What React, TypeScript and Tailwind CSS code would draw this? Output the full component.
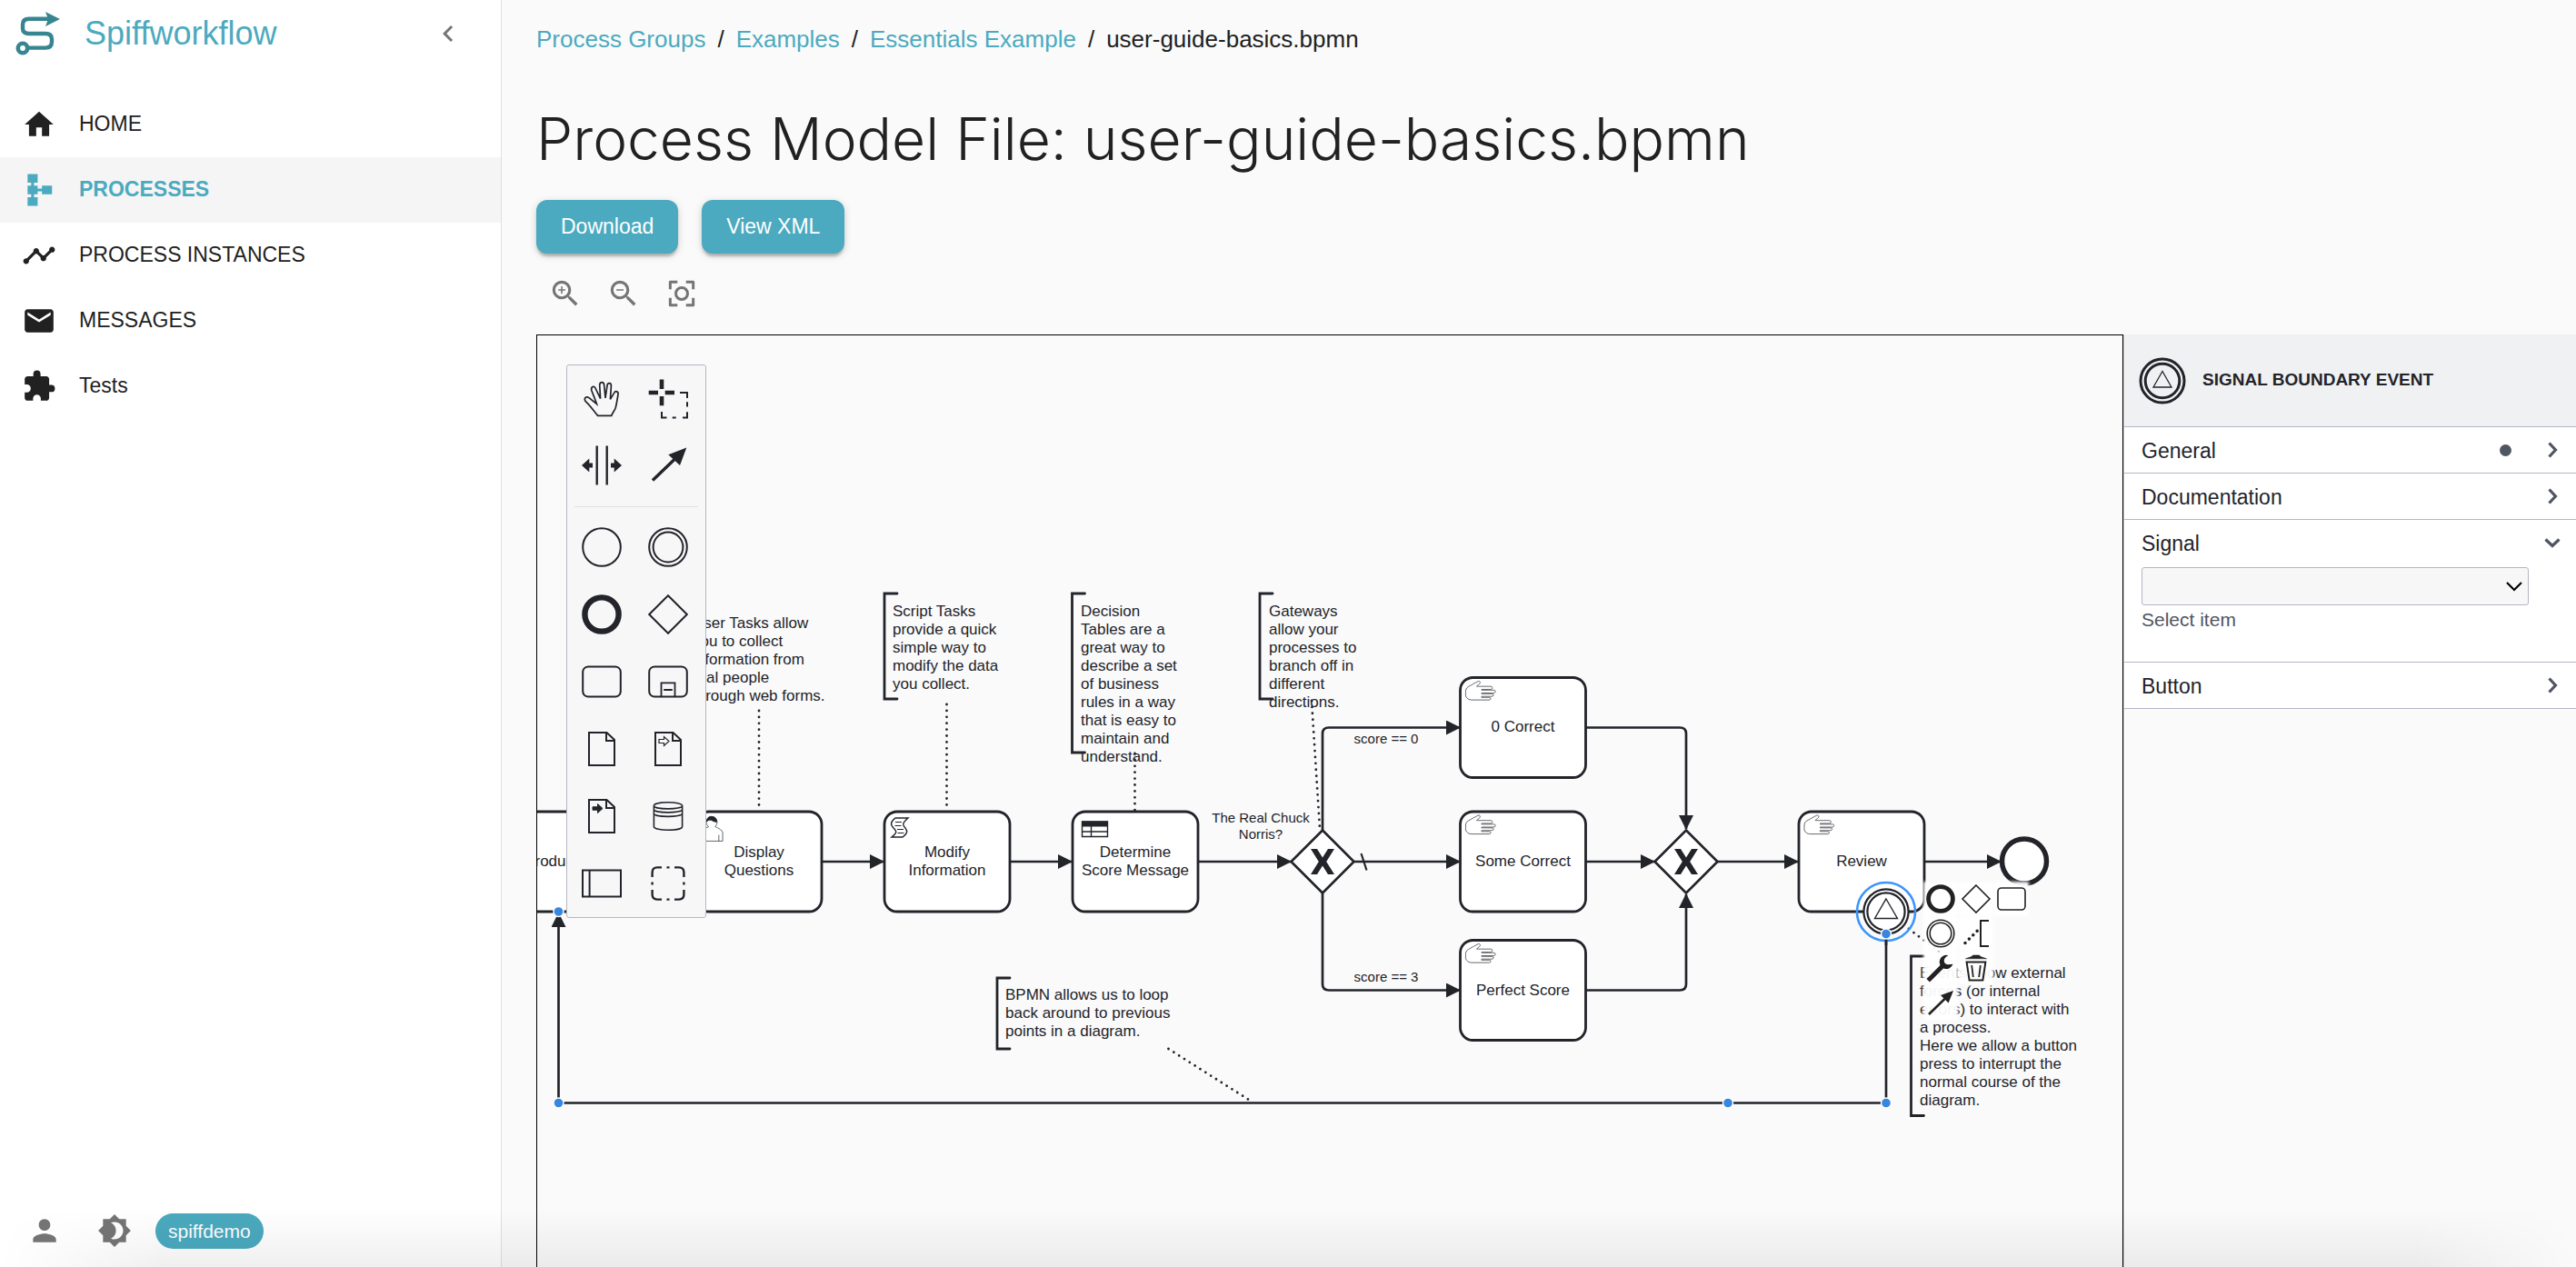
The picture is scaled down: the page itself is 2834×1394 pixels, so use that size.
import React from 'react';
import {
  MdBrightness4,
  MdChevronLeft,
  MdEmail,
  MdExtension,
  MdHome,
  MdPerson,
  MdSchema,
  MdTimeline,
  MdZoomIn,
  MdZoomOut,
} from 'react-icons/md';

const INK = '#22242a';
const BLUE = '#3787e0';

/* ---------- sidebar ---------- */

function Logo() {
  return (
    <svg width="50" height="50" viewBox="0 0 50 50" fill="none" aria-hidden="true">
      <circle cx="8" cy="41" r="5.2" stroke="#378591" strokeWidth="4.6" />
      <path
        d="M14 40.6H33Q40 40.6 40 34V31Q40 25 33 25H15Q8 25 8 19V15Q8 8.8 15 8.8H37"
        stroke="#378591"
        strokeWidth="4.4"
      />
      <path d="M33 1L49 8.9L33 17L36 8.9Z" fill="#378591" />
    </svg>
  );
}

const navItems = [
  { label: 'HOME', Icon: MdHome, active: false },
  { label: 'PROCESSES', Icon: MdSchema, active: true },
  { label: 'PROCESS INSTANCES', Icon: MdTimeline, active: false },
  { label: 'MESSAGES', Icon: MdEmail, active: false },
  { label: 'Tests', Icon: MdExtension, active: false },
];

function Sidebar() {
  return (
    <aside className="flex w-[552px] shrink-0 flex-col border-r border-[#e0e0e0] bg-white">
      <div className="flex h-[101px] items-start justify-between pl-[17px] pr-10 pt-3">
        <a href="#home" className="flex items-center gap-[26px]">
          <Logo />
          <span className="text-[36px] leading-[50px] text-[#4baabf]">Spiffworkflow</span>
        </a>
        <button type="button" aria-label="Collapse navigation" className="flex h-[50px] items-center text-[#757575]">
          <MdChevronLeft size={36} />
        </button>
      </div>
      <nav className="flex flex-col">
        {navItems.map(({ label, Icon, active }) => (
          <a
            key={label}
            href="#nav"
            className={
              active
                ? 'flex h-[72px] items-center gap-[25px] bg-[#f5f5f5] pl-6 text-[23px] font-bold text-[#4baabf]'
                : 'flex h-[72px] items-center gap-[25px] pl-6 text-[23px] text-[#212121]'
            }
          >
            <Icon size={38} />
            <span className="pb-[2px]">{label}</span>
          </a>
        ))}
      </nav>
      <div className="mt-auto flex h-20 items-center pl-[30px] text-[#757575]">
        <button type="button" aria-label="Account">
          <MdPerson size={38} />
        </button>
        <button type="button" aria-label="Toggle dark mode" className="ml-[39px]">
          <MdBrightness4 size={38} />
        </button>
        <span className="ml-[26px] rounded-full bg-[#4baabf] px-[14px] text-[21px] leading-[39px] text-white">
          spiffdemo
        </span>
      </div>
    </aside>
  );
}

/* ---------- palette ---------- */

const doc = 'M8 4H27.5L36 12V40H8Z M27 4V13H36';

const toolIcons: { name: string; art: React.ReactNode }[] = [
  {
    name: 'Hand tool',
    art: (
      <path
        d="M17.7 40.4C13 35 10 30 4 24.4C2 21 5 18.5 8 20.6L16.5 27.5C14 20 12 16 10.7 12.2C10 8.5 13.6 7 15 10L20.6 21.6L19.7 7C19.8 2.6 24.4 2.6 24.7 7L26 20.8L28 7.3C28.4 3.6 32.6 3.8 32.4 7.6L31.4 22.4L35.6 15.4C37 12.6 40.6 13.6 40 17C39 23 38.2 28 37.3 31.4C36.6 34 34 37 32.7 40.4Z"
        strokeWidth="1.7"
      />
    ),
  },
  {
    name: 'Lasso tool',
    art: (
      <>
        <path d="M0.7 15H11M18.7 15H29M15 0.5V11M15 19V29.3" strokeWidth="4.6" />
        <path d="M35 15H43V21M43 25.3V30.6M43 36.3V42.4H38M26.7 42.4H30.7M20.5 42.4H15V36" />
      </>
    ),
  },
  {
    name: 'Space tool',
    art: (
      <>
        <path d="M16.7 0.4V43.6M27.7 0.4V43.6" strokeWidth="2.4" />
        <path
          d="M0 22L8.3 14.5V19.5H12V24.5H8.3V29.5ZM44 22L35.7 14.5V19.5H32V24.5H35.7V29.5Z"
          fill={INK}
          stroke="none"
        />
      </>
    ),
  },
  {
    name: 'Connect',
    art: (
      <>
        <path d="M5 38.5L30 14.5" strokeWidth="3.4" />
        <path d="M42.3 2.4L35 22L22.3 10.2Z" fill={INK} stroke="none" />
      </>
    ),
  },
];

const shapeIcons: { name: string; art: React.ReactNode }[] = [
  { name: 'Start event', art: <circle cx="22" cy="22" r="20.8" /> },
  {
    name: 'Intermediate event',
    art: (
      <>
        <circle cx="22" cy="22" r="20.8" />
        <circle cx="22" cy="22" r="16.4" />
      </>
    ),
  },
  { name: 'End event', art: <circle cx="22" cy="22" r="18.6" strokeWidth="6.4" /> },
  { name: 'Gateway', art: <path d="M22 1.2L42.8 22L22 42.8L1.2 22Z" /> },
  { name: 'Task', art: <rect x="1.2" y="5.4" width="41.6" height="33.2" rx="6" /> },
  {
    name: 'Sub-process',
    art: (
      <>
        <rect x="1.2" y="5.4" width="41.6" height="33.2" rx="6" />
        <path d="M14.5 38.6V23.4H29.5V38.6M17.2 31H26.8" strokeWidth="1.8" />
      </>
    ),
  },
  { name: 'Data object', art: <path d={doc} /> },
  {
    name: 'Data input',
    art: (
      <>
        <path d={doc} />
        <path d="M12 11.5H17.5V8.5L23 13.5L17.5 18.5V15.5H12Z" strokeWidth="1.2" />
      </>
    ),
  },
  {
    name: 'Data output',
    art: (
      <>
        <path d={doc} />
        <path d="M12 11.8H17.5V8.5L23 13.5L17.5 18.5V15.2H12Z" fill={INK} strokeWidth="1" />
      </>
    ),
  },
  {
    name: 'Data store',
    art: (
      <path
        d="M6.4 10.5C6.4 5.5 37.6 5.5 37.6 10.5V33.5C37.6 38.5 6.4 38.5 6.4 33.5ZM6.4 10.5C6.4 15 37.6 15 37.6 10.5M6.4 14.5C6.4 19 37.6 19 37.6 14.5M6.4 19C6.4 23.5 37.6 23.5 37.6 19"
        strokeWidth="1.6"
      />
    ),
  },
  { name: 'Pool', art: <path d="M1 7.6H43V36.4H1ZM8.6 7.6V36.4" /> },
  {
    name: 'Group',
    art: (
      <path
        d="M4.6 15V10Q4.6 4.4 10 4.4H15M20.5 4.4H23.5M29 4.4H34Q39.4 4.4 39.4 10V15M39.4 20.5V23.5M39.4 29V34Q39.4 39.6 34 39.6H29M23.5 39.6H20.5M15 39.6H10Q4.6 39.6 4.6 34V29M4.6 23.5V20.5"
        strokeWidth="2.4"
      />
    ),
  },
];

function PaletteIcon({ children }: { children: React.ReactNode }) {
  return (
    <svg width="44" height="44" viewBox="0 0 44 44" fill="none" stroke={INK} strokeWidth="2" aria-hidden="true">
      {children}
    </svg>
  );
}

function Palette() {
  return (
    <div className="absolute left-8 top-8 w-[154px] rounded-[3px] border border-[#b4b7c6] bg-[#f7f7f8] pl-px pr-1">
      <div className="grid grid-cols-2">
        {toolIcons.map((t) => (
          <button key={t.name} type="button" aria-label={t.name} className="flex h-[73px] items-center justify-center">
            <PaletteIcon>{t.art}</PaletteIcon>
          </button>
        ))}
      </div>
      <hr className="ml-[7px] mr-1 mb-[7px] mt-[9px] border-t border-[#e0e0e4]" />
      <div className="grid grid-cols-2">
        {shapeIcons.map((t) => (
          <button key={t.name} type="button" aria-label={t.name} className="flex h-[74px] items-center justify-center">
            <PaletteIcon>{t.art}</PaletteIcon>
          </button>
        ))}
      </div>
    </div>
  );
}

/* ---------- diagram ---------- */

const HAND =
  'm 17,15 c 0.234,-0.01 5.604,0.008 8.029,0.004 0.808,0 1.271,-0.172 1.417,-0.752 0.227,-0.898 -0.334,-1.314 -1.338,-1.316 -2.467,-0.01 -7.886,-0.004 -8.108,-0.004 -0.014,-0.079 0.016,-0.533 0,-0.61 0.195,-0.042 8.507,0.006 9.616,0.002 0.877,-0.007 1.35,-0.438 1.353,-1.208 0.003,-0.768 -0.479,-1.09 -1.35,-1.091 -2.968,-0.002 -9.619,-0.013 -9.619,-0.013 v -0.591 c 0,0 5.052,-0.016 7.225,-0.016 0.888,-0.002 1.354,-0.416 1.351,-1.193 -0.006,-0.761 -0.492,-1.196 -1.361,-1.196 -3.473,-0.005 -10.86,-0.003 -11.083,-0.003 -0.022,-0.047 -0.045,-0.094 -0.069,-0.139 0.394,-0.319 2.041,-1.626 2.415,-2.017 0.469,-0.487 0.519,-1.165 0.162,-1.604 -0.414,-0.511 -0.973,-0.5 -1.48,-0.236 -1.461,0.764 -6.6,3.643 -7.733,4.271 -0.9,0.499 -1.516,1.253 -1.882,2.19 -0.37,0.95 -0.17,2.01 -0.166,2.979 0.004,0.718 -0.273,1.345 -0.055,2.063 0.629,2.087 2.425,3.312 4.859,3.318 4.618,0.014 9.238,-0.014 13.857,-0.016 0.755,-0.001 1.171,-0.301 1.182,-1.033 0.012,-0.754 -0.423,-0.969 -1.183,-0.973 -1.778,-0.01 -5.824,-0.004 -6.04,-0.004 0.001,-0.084 0.003,-0.586 0.001,-0.67 z';

function Lines({
  x,
  y,
  step,
  lines,
  anchor = 'start',
}: {
  x: number;
  y: number;
  step: number;
  lines: string[];
  anchor?: 'start' | 'middle';
}) {
  return (
    <text x={x} y={y} textAnchor={anchor} fill={INK} stroke="none">
      {lines.map((l, i) => (
        <tspan key={l} x={x} y={y + i * step}>
          {l}
        </tspan>
      ))}
    </text>
  );
}

function Task({
  x,
  y,
  lines,
  baseline,
  children,
}: {
  x: number;
  y: number;
  lines: string[];
  baseline: number;
  children?: React.ReactNode;
}) {
  return (
    <g>
      <rect x={x} y={y} width="138" height="110" rx="14" fill="#fff" strokeWidth="2.8" />
      <g transform={`translate(${x} ${y})`}>{children}</g>
      <Lines x={x + 69} y={baseline} step={20} lines={lines} anchor="middle" />
    </g>
  );
}

function HandMark() {
  return <path d={HAND} transform="scale(1.38)" fill="#fff" strokeWidth="0.5" />;
}

function Gateway({ x, y }: { x: number; y: number }) {
  return (
    <g transform={`translate(${x} ${y})`}>
      <path d="M0 -34.5L34.5 0L0 34.5L-34.5 0Z" fill="#fff" strokeWidth="2.6" strokeLinejoin="round" />
      <path
        d="M-13 -14H-6L0 -4.5L6 -14H13L4.2 0L13 14H6L0 4.5L-6 14H-13L-4.2 0Z"
        fill={INK}
        stroke="none"
      />
    </g>
  );
}

function Bracket({ x, top, bottom }: { x: number; top: number; bottom: number }) {
  return <path d={`M${x + 14} ${top}H${x}V${bottom}H${x + 14}`} strokeWidth="2.8" strokeLinecap="round" />;
}

const flows = [
  'M904 948H972',
  'M1111 948H1179',
  'M1318 948H1420',
  'M1490 948H1606',
  'M1745 948H1820',
  'M1889 948H1978',
  'M2117 948H2201',
  'M1455 913V807Q1455 800.5 1462 800.5H1606',
  'M1455 983V1083Q1455 1089.5 1462 1089.5H1606',
  'M1745 800.5H1848Q1855 800.5 1855 807V912',
  'M1745 1089.5H1848Q1855 1089.5 1855 1083V984',
  'M2075 1028V1213.5H614.5V1005',
];

const associations = [
  'M835 782V892',
  'M1041.5 775V892',
  'M1248.5 829V892',
  'M1443 771L1452 912',
  'M1285.5 1154L1377 1212',
  'M2100 1022L2138 1051',
];

const handles = [
  [614.5, 1003],
  [614.5, 1213.5],
  [1901, 1213.5],
  [2075, 1213.5],
  [2075, 1027.5],
];

function Diagram() {
  return (
    <svg
      className="absolute inset-0 h-full w-full"
      fill="none"
      stroke={INK}
      strokeWidth="2.7"
      fontFamily="'Liberation Sans', Arial, sans-serif"
      fontSize="17"
      role="img"
      aria-label="BPMN process diagram"
    >
      <defs>
        <marker
          id="arrow"
          viewBox="0 0 16 16"
          refX="15"
          refY="8"
          markerWidth="16"
          markerHeight="16"
          markerUnits="userSpaceOnUse"
          orient="auto"
        >
          <path d="M0 0L16 8L0 16Z" fill={INK} stroke="none" />
        </marker>
      </defs>
      <g transform="translate(-591 -369)">
        <Task x={545} y={893} lines={['Introduction']} baseline={953} />
        <Task x={766} y={893} lines={['Display', 'Questions']} baseline={943}>
          <g transform="scale(1.38)" strokeWidth="0.5">
            <path
              d="m 15,12 c 0.909,-0.845 1.594,-2.049 1.594,-3.385 0,-2.554 -1.805,-4.622 -4.357,-4.622 -2.552,0 -4.288,2.068 -4.288,4.622 0,1.348 0.974,2.562 1.896,3.405 -0.529,0.187 -5.669,2.097 -5.794,4.756 v 6.718 h 17 v -6.718 c 0,-2.298 -5.528,-4.595 -6.051,-4.776 z m -8,6 l 0,5.5 m 11,0 l 0,-5"
              fill="#fff"
            />
            <path
              d="M8.1 8.2c0 0 2.251,-2.358 4.274,-1.177 2.024,1.181 4.221,1.537 4.124,0.965 -0.098,-0.57 -0.117,-3.791 -4.191,-4.136 -3.572,-0.304 -4.207,3.292 -4.207,4.348 z"
              fill={INK}
            />
          </g>
        </Task>
        <Task x={973} y={893} lines={['Modify', 'Information']} baseline={943}>
          <path
            d="M12 7H26C19 13 20 15 23 18C26 22 25 24 20 28H8C14 23 14 22 10 18C6 14 7 11 12 7Z"
            strokeWidth="1.4"
          />
          <path d="M12 11.5H19M11.5 15.5H18.5M14 19.5H21M14.5 23.5H21.5" strokeWidth="1.2" />
        </Task>
        <Task x={1180} y={893} lines={['Determine', 'Score Message']} baseline={943}>
          <path d="M10.5 11H38.5V27.5H10.5ZM10.5 22H38.5M20.5 16V27.5" strokeWidth="1.4" />
          <path d="M10 10.5H39V16.5H10Z" fill={INK} stroke="none" />
        </Task>
        {[
          { y: 745.5, b: 805, l: '0 Correct' },
          { y: 893, b: 953, l: 'Some Correct' },
          { y: 1034.5, b: 1095, l: 'Perfect Score' },
        ].map((t) => (
          <Task key={t.l} x={1606.5} y={t.y} lines={[t.l]} baseline={t.b}>
            <HandMark />
          </Task>
        ))}
        <Task x={1979} y={893} lines={['Review']} baseline={953}>
          <HandMark />
        </Task>

        {flows.map((d) => (
          <path key={d} d={d} markerEnd="url(#arrow)" />
        ))}
        <path d="M1497.5 939L1503.5 957.5" strokeWidth="2.2" />
        {associations.map((d) => (
          <path key={d} d={d} strokeWidth="2.8" strokeLinecap="round" strokeDasharray="0 6.9" />
        ))}

        <Gateway x={1455} y={948} />
        <Gateway x={1855} y={948} />
        <circle cx="2227" cy="947.5" r="24.5" fill="#fff" strokeWidth="5.5" />

        <circle cx="2075" cy="1003" r="24.6" fill="#fff" strokeWidth="2.2" />
        <circle cx="2075" cy="1003" r="20.6" fill="#fff" strokeWidth="2.2" />
        <path d="M2075 989L2087.5 1010.5H2062.5Z" strokeWidth="1.4" />
        <circle cx="2075" cy="1003" r="32" stroke="#3c95fa" strokeWidth="2.6" />
        <path d="M2075 1027V1040" />
        {handles.map(([cx, cy]) => (
          <circle key={`${cx}-${cy}`} cx={cx} cy={cy} r="5.5" fill={BLUE} stroke="#fff" strokeWidth="1.4" />
        ))}

        <Lines
          x={762}
          y={691}
          step={20}
          lines={['User Tasks allow', 'you to collect', 'information from', 'real people', 'through web forms.']}
        />
        <Bracket x={973} top={653} bottom={769} />
        <Lines
          x={982}
          y={678}
          step={20}
          lines={['Script Tasks', 'provide a quick', 'simple way to', 'modify the data', 'you collect.']}
        />
        <Bracket x={1179.5} top={653} bottom={828} />
        <Lines
          x={1189}
          y={678}
          step={20}
          lines={[
            'Decision',
            'Tables are a',
            'great way to',
            'describe a set',
            'of business',
            'rules in a way',
            'that is easy to',
            'maintain and',
            'understand.',
          ]}
        />
        <Bracket x={1386} top={653} bottom={769} />
        <Lines
          x={1396}
          y={678}
          step={20}
          lines={['Gateways', 'allow your', 'processes to', 'branch off in', 'different', 'directions.']}
        />
        <Bracket x={1097} top={1076} bottom={1154} />
        <Lines
          x={1106}
          y={1100}
          step={20}
          lines={['BPMN allows us to loop', 'back around to previous', 'points in a diagram.']}
        />
        <Bracket x={2102.5} top={1052} bottom={1227.5} />
        <Lines
          x={2112}
          y={1076}
          step={20}
          lines={[
            'Events allow external',
            'forces (or internal',
            'errors) to interact with',
            'a process.',
            'Here we allow a button',
            'press to interrupt the',
            'normal course of the',
            'diagram.',
          ]}
        />
        <g fontSize="15">
          <Lines x={1387} y={905} step={18} lines={['The Real Chuck', 'Norris?']} anchor="middle" />
          <Lines x={1525} y={818} step={18} lines={['score == 0']} anchor="middle" />
          <Lines x={1525} y={1080} step={18} lines={['score == 3']} anchor="middle" />
        </g>
      </g>
    </svg>
  );
}

const padRows: { name: string; art: React.ReactNode }[][] = [
  [
    { name: 'Append end event', art: <circle cx="17" cy="17" r="13.4" strokeWidth="4.8" /> },
    { name: 'Append gateway', art: <path d="M17 2L32 17L17 32L2 17Z" strokeWidth="1.6" /> },
    { name: 'Append task', art: <rect x="2" y="5" width="30" height="24" rx="4" strokeWidth="1.6" /> },
  ],
  [
    {
      name: 'Append intermediate event',
      art: (
        <>
          <circle cx="17" cy="17" r="14.8" strokeWidth="1.6" />
          <circle cx="17" cy="17" r="11.8" strokeWidth="1.6" />
        </>
      ),
    },
    {
      name: 'Add text annotation',
      art: (
        <>
          <path d="M31 3H22V31H31" strokeWidth="2" />
          <path d="M5 27.5L18.5 14" strokeWidth="3.6" strokeLinecap="round" strokeDasharray="0 6.2" />
        </>
      ),
    },
  ],
  [
    {
      name: 'Change element',
      art: (
        <>
          <path d="M5 29L17 17" strokeWidth="5" strokeLinecap="square" />
          <path
            d="M25.5 3.2A7.6 7.6 0 1 0 30.5 12.8L25 13.2Q20.5 12.6 20.8 8.2Q21.5 5 25.5 3.2Z"
            fill="#222"
            stroke="none"
          />
        </>
      ),
    },
    {
      name: 'Remove',
      art: (
        <>
          <path d="M5.5 6.8L12 4.6L13.5 3H20.5L22 4.6L28.5 6.8Z" fill="#222" strokeWidth="0.6" />
          <path d="M6.6 10.5H27.4L24.4 30.5H9.6Z" strokeWidth="2" />
          <path d="M12.2 14L13.8 27M21.8 14L20.2 27" strokeWidth="1.8" />
        </>
      ),
    },
  ],
  [
    {
      name: 'Connect to other element',
      art: (
        <>
          <path d="M4 30L22 12.5" strokeWidth="2.6" />
          <path d="M31 4L25.6 17.6L17 9Z" fill="#222" stroke="none" />
        </>
      ),
    },
  ],
];

function ContextPad() {
  return (
    <div className="absolute left-[1527px] top-[603px] flex flex-col gap-1">
      {padRows.map((row, i) => (
        <div key={i} className="flex gap-[5px]">
          {row.map((p) => (
            <button
              key={p.name}
              type="button"
              aria-label={p.name}
              className="size-[34px] bg-white/95 shadow-[0_0_3px_2px_rgba(255,255,255,0.95)]"
            >
              <svg width="34" height="34" viewBox="0 0 34 34" fill="none" stroke="#222" aria-hidden="true">
                {p.art}
              </svg>
            </button>
          ))}
        </div>
      ))}
    </div>
  );
}

/* ---------- properties panel ---------- */

function Chevron({ open }: { open?: boolean }) {
  return (
    <svg width="18" height="18" viewBox="0 0 18 18" fill="none" stroke="#505562" strokeWidth="3.2" aria-hidden="true">
      <path d={open ? 'M1.5 5.5L9 12.5L16.5 5.5' : 'M5.5 1.5L12.5 9L5.5 16.5'} />
    </svg>
  );
}

function GroupHeader({ label, dot, open }: { label: string; dot?: boolean; open?: boolean }) {
  return (
    <button
      type="button"
      aria-expanded={!!open}
      className="flex h-[50px] w-full items-center bg-white pl-[19px] pr-[17px] text-left text-[23px] text-[#22242a]"
    >
      <span className="flex-1 pt-[2px]">{label}</span>
      {dot && <span className="mr-9 size-[13px] rounded-full bg-[#505562]" />}
      <Chevron open={open} />
    </button>
  );
}

function PropertiesPanel() {
  return (
    <aside className="w-[498px] shrink-0 border-l border-[#ccc]">
      <header className="flex h-[102px] items-center gap-[18px] border-b border-[#b4b7c6] bg-[#f0f1f3] pl-4">
        <svg width="52" height="52" viewBox="0 0 52 52" fill="none" stroke={INK} aria-hidden="true">
          <circle cx="26" cy="26" r="24" strokeWidth="3" />
          <circle cx="26" cy="26" r="18.8" strokeWidth="3" />
          <path d="M26 15.5L36 33H16Z" strokeWidth="1.3" />
        </svg>
        <h2 className="text-[19px] font-bold text-[#22242a]">SIGNAL BOUNDARY EVENT</h2>
      </header>
      <section className="border-b border-[#b4b7c6]">
        <GroupHeader label="General" dot />
      </section>
      <section className="border-b border-[#b4b7c6]">
        <GroupHeader label="Documentation" />
      </section>
      <section className="border-b border-[#b4b7c6] bg-white">
        <GroupHeader label="Signal" open />
        <div className="flex flex-col pb-8 pl-[19px] pr-[52px] pt-[2px]">
          <div className="relative">
            <select
              id="signal-ref"
              aria-label="Signal reference"
              className="h-[42px] w-full appearance-none rounded-[3px] border border-[#b4b7c6] bg-[#f7f7f8]"
            />
            <svg
              className="pointer-events-none absolute right-[7px] top-[12px]"
              width="18"
              height="18"
              viewBox="0 0 18 18"
              fill="none"
              stroke="#000"
              strokeWidth="2.2"
              aria-hidden="true"
            >
              <path d="M1 5L9 13L17 5" />
            </svg>
          </div>
          <label htmlFor="signal-ref" className="mt-[2px] text-[21px] leading-[28px] text-[#505562]">
            Select item
          </label>
        </div>
      </section>
      <section className="border-b border-[#b4b7c6]">
        <GroupHeader label="Button" />
      </section>
    </aside>
  );
}

/* ---------- page ---------- */

const crumbs = ['Process Groups', 'Examples', 'Essentials Example'];

const actionClass =
  'h-[59px] rounded-xl bg-[#4baabf] px-[27px] text-[23px] text-white shadow-[0_4px_3px_-1px_rgba(0,0,0,0.22),0_2px_8px_rgba(0,0,0,0.18)]';

export default function App() {
  return (
    <div className="relative flex h-screen overflow-hidden bg-[#fafafa] font-['Liberation_Sans',Arial,sans-serif] text-[#212121]">
      <Sidebar />
      <main className="flex min-w-0 flex-1 flex-col pl-[38px] pt-[23px]">
        <nav aria-label="Breadcrumb" className="flex h-10 items-center gap-[13px] text-[26px]">
          {crumbs.map((c) => (
            <React.Fragment key={c}>
              <a href="#crumb" className="text-[#4baabf]">
                {c}
              </a>
              <span>/</span>
            </React.Fragment>
          ))}
          <span>user-guide-basics.bpmn</span>
        </nav>
        <h1 className="mt-[50px] font-['Inter','Liberation_Sans',sans-serif] text-[64px] font-light leading-[80px]">
          Process Model File: user-guide-basics.bpmn
        </h1>
        <div className="mt-[27px] flex gap-[26px]">
          <button type="button" className={actionClass}>
            Download
          </button>
          <button type="button" className={actionClass}>
            View XML
          </button>
        </div>
        <div className="mt-3 flex text-[#757575]">
          <button type="button" aria-label="Zoom in" className="flex size-16 items-center justify-center">
            <MdZoomIn size={38} />
          </button>
          <button type="button" aria-label="Zoom out" className="flex size-16 items-center justify-center">
            <MdZoomOut size={38} />
          </button>
          <button type="button" aria-label="Fit to view" className="flex size-16 items-center justify-center">
            <svg
              width="38"
              height="38"
              viewBox="0 0 24 24"
              fill="none"
              stroke="currentColor"
              strokeWidth="1.9"
              strokeLinejoin="round"
              aria-hidden="true"
            >
              <path d="M4 9V4H9M15 4H20V9M20 15V20H15M9 20H4V15" />
              <circle cx="12" cy="12" r="4.1" />
            </svg>
          </button>
        </div>
        <div className="mt-[13px] flex min-h-0 flex-1">
          <div className="relative min-w-0 flex-1 overflow-hidden border border-b-0 border-black">
            <Diagram />
            <Palette />
            <ContextPad />
          </div>
          <PropertiesPanel />
        </div>
      </main>
      <div className="pointer-events-none absolute inset-x-0 bottom-0 h-16 bg-linear-to-b from-black/0 to-black/6 [mask-image:linear-gradient(to_right,transparent,black_180px,black_calc(100%-180px),transparent)]" />
    </div>
  );
}
